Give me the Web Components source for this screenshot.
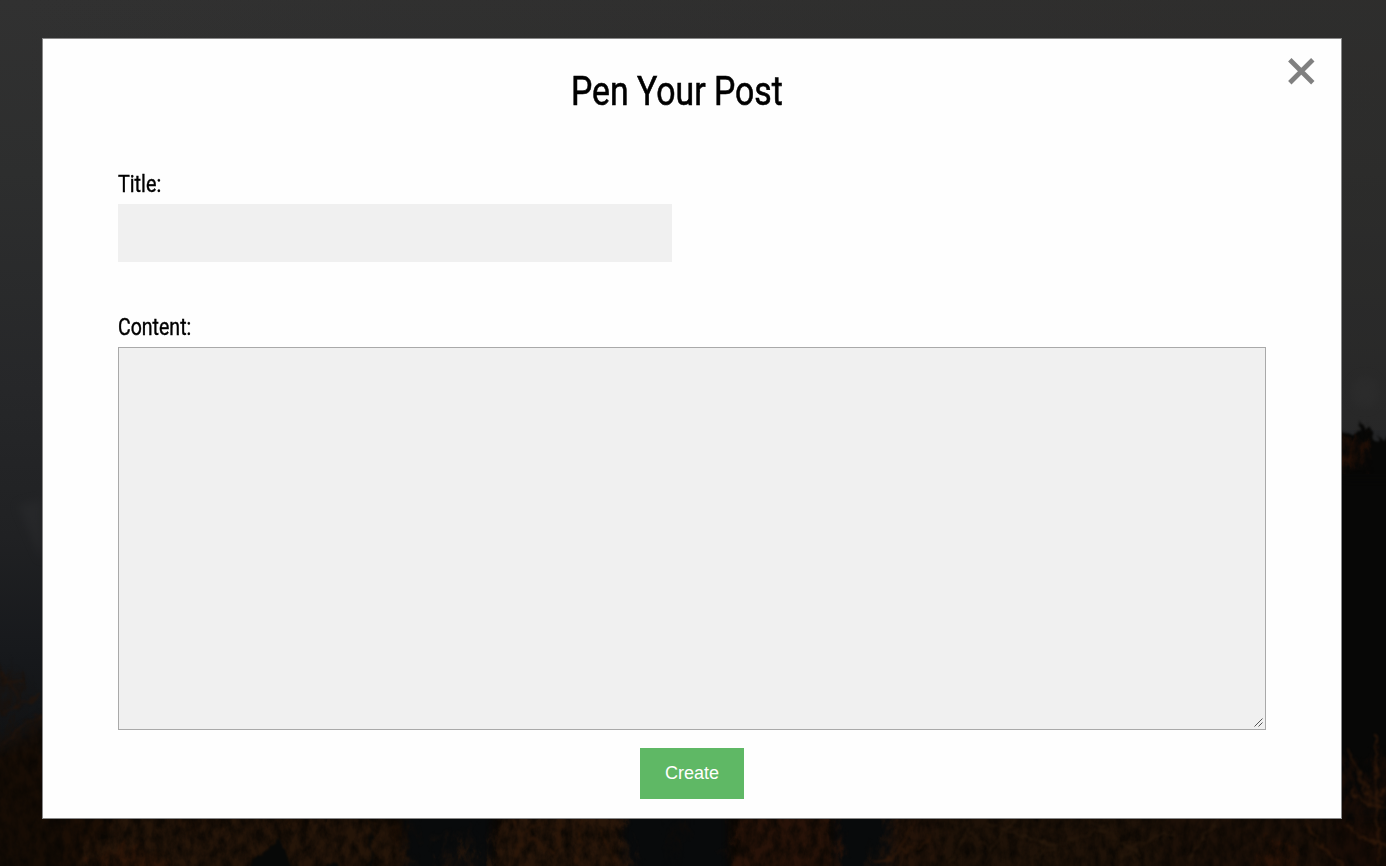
<!DOCTYPE html>
<html lang="en">
<head>
<meta charset="utf-8">
<title>Pen Your Post</title>
<style>
html, body { margin: 0; height: 100%; overflow: hidden; background: #0a0806; }
</style>
</head>
<body>
<post-page></post-page>
<script>
const define = (name, html, setup) => customElements.define(name, class extends HTMLElement {
  connectedCallback() {
    if (this.shadowRoot) return;
    const t = document.createElement('template');
    t.innerHTML = html;
    this.attachShadow({ mode: 'open' }).append(t.content.cloneNode(true));
    if (setup) setup(this, this.shadowRoot);
  }
});

// Dimmed autumn forest behind the dialog
define('forest-backdrop', `
<style>:host{display:block;position:absolute;inset:0;overflow:hidden}svg{display:block;width:100%;height:100%}filter{color-interpolation-filters:sRGB}</style>
<svg viewBox="0 0 1386 866" preserveAspectRatio="none" aria-hidden="true">
<defs>
<linearGradient id="sky" x1="0" y1="0" x2="0" y2="1">
<stop offset="0" stop-color="#313131"/><stop offset=".2" stop-color="#2d2e2e"/><stop offset=".45" stop-color="#262729"/><stop offset=".62" stop-color="#202123"/><stop offset=".75" stop-color="#17191c"/><stop offset="1" stop-color="#080909"/>
</linearGradient>
<linearGradient id="warm" x1="0" x2="1"><stop offset="0" stop-color="#2b2a28" stop-opacity="0"/><stop offset="1" stop-color="#2b2a28" stop-opacity=".5"/></linearGradient>
<filter id="soft" x="-30%" y="-30%" width="160%" height="160%"><feGaussianBlur stdDeviation="7"/></filter>
<filter id="haze" x="-50%" y="-50%" width="200%" height="200%"><feGaussianBlur stdDeviation="4"/></filter>
<filter id="leaf" x="-20%" y="-20%" width="140%" height="140%">
<feTurbulence type="fractalNoise" baseFrequency=".11 .07" numOctaves="4" seed="8" result="n"/>
<feColorMatrix in="n" values="0 0 0 0 0  0 0 0 0 0  0 0 0 0 0  0 0 0 1.7 -.22" result="m"/>
<feGaussianBlur in="SourceGraphic" stdDeviation="4" result="b"/>
<feDisplacementMap in="b" in2="n" scale="34" xChannelSelector="R" yChannelSelector="G" result="d"/>
<feComposite in="d" in2="m" operator="in"/><feGaussianBlur stdDeviation=".7"/>
</filter>
<filter id="twig" x="-20%" y="-20%" width="140%" height="140%">
<feTurbulence type="fractalNoise" baseFrequency=".12" numOctaves="2" seed="3" result="n"/>
<feDisplacementMap in="SourceGraphic" in2="n" scale="11" xChannelSelector="R" yChannelSelector="G"/><feGaussianBlur stdDeviation="1"/>
</filter>
</defs>
<rect width="1386" height="866" fill="url(#sky)"/>
<rect width="1386" height="430" fill="url(#warm)"/>
<path d="M18 505l24-6v62z" fill="#2a2b2d" opacity=".6" filter="url(#haze)"/>
<ellipse cx="1365" cy="392" rx="14" ry="16" fill="#2e2e2e" opacity=".5" filter="url(#haze)"/>
<path d="M1330 866V440l12-8 12 4 4-10 4-5 3 10 4-6 5 13 3 6 3-11 4 8 6-8v433z" fill="#070706" filter="url(#twig)"/>
<path d="M1336 440l18-5 12 6 2 22-32 4z" fill="#220f06" filter="url(#leaf)"/>
<path d="M-10 755Q20 742 50 720V810H1400V876H-10z" fill="#0b0703" filter="url(#soft)"/>
<g filter="url(#haze)" fill="#080a0b">
<rect x="402" y="812" width="90" height="64"/><rect x="622" y="812" width="106" height="64"/><rect x="834" y="812" width="62" height="64"/><rect x="1341" y="480" width="55" height="340" fill="#070706"/>
</g>
<g opacity=".84">
<g filter="url(#leaf)" fill="#2b180a">
<path d="M-10 667l22 4 16 18-10 17-28 7zM-10 732l55-16v33l-55 20z" fill="#1a1009"/>
<rect x="-10" y="750" width="65" height="125" fill="#1a0e05"/>
<path d="M60 815h350v60H60z" fill="#201005"/>
<path d="M80 876l12-35 30-20 40-4 24 12 30-8 52-4 26 10 20-12 65-2 14 12 8 24 12 27z"/>
<path d="M90 876q5-30 30-26 30-14 55 26z" fill="#341808"/>
<path d="M438 876l7-42 8 42zM456 876l12-48 10 48zM488 876l10-66 118 0 24 66z" fill="#2e190b"/>
<path d="M668 876l6-30 0-24 12 0z" fill="#150c06"/>
<path d="M728 876l10-60 94-8 8 68z" fill="#2e1509"/>
<path d="M866 876l14-26 16-44 45 6 10 64z" fill="#29160a"/>
<rect x="940" y="800" width="245" height="86" fill="#241509"/>
<rect x="1165" y="800" width="165" height="86" fill="#211208"/>
<path d="M1255 876l12-40 25 10 5 30z" fill="#301507"/>
<path d="M1340 755l12 8 14 35 8-42 14-8v128h-60z" fill="#1c0d06"/>
</g>
<g fill="#070908" filter="url(#twig)">
<path d="M245 876l12-22 8-2 14-14 6 12 10 26zM320 876l12-16 14 16z"/>
<path d="M372 812l2 64h-4z"/>
</g>
<g fill="none" stroke="#351b0a" stroke-width="2" filter="url(#twig)">
<path d="M0 686q14-8 24-3M4 716q18-14 36-20M2 745q20-24 42-30M0 672q12 14 21 27" stroke="#25150b"/>
<path d="M1347 748q12 28 24 58M1376 735q0 55 3 130M1352 790q16 22 44 16M1345 824q20 20 50 22M1306 825q26 38 45 46M1360 770q8 26 22 34M1388 780q-10 26-20 24"/>
<path d="M510 818l14 16 18-12M515 856l10-24 30 24 6-38M582 818l-6 45M600 830l15 30M875 862l18-4 20-33M900 850q24 1 30-15"/>
</g>
<path d="M950 864l18-34 22 20 24-32M1030 860q40-22 82-34M1120 860q26-25 55-27M1190 860q8-23 30-40M986 824l70 22M1090 820l52 36" fill="none" stroke="#2e1d0e" stroke-width="1.5" filter="url(#twig)"/>
</g>
</svg>`);

// Condensed lettering: natural glyphs narrowed to the requested width
define('narrow-text', `
<style>:host{display:block;font-family:Roboto,"Liberation Sans",sans-serif;white-space:nowrap;color:#000}span{display:inline-block;transform-origin:0 50%}</style>
<span><slot></slot></span>`, (host, root) => {
  const span = root.querySelector('span');
  const width = Number(host.getAttribute('width'));
  host.style.width = width + 'px';
  span.style.transform = `scaleX(${width / span.offsetWidth})`;
});

define('close-button', `
<style>:host{display:block;position:absolute;top:19px;right:26px;width:27px;height:27px;cursor:pointer}svg{display:block}</style>
<svg width="27" height="27" viewBox="0 0 27 27" role="img" aria-label="Close"><path d="M1.8 1.8L24.8 24.8M24.8 1.8L1.8 24.8" stroke="#808080" stroke-width="4.8" fill="none"/></svg>`);

define('form-field', `
<style>
:host{display:block}
narrow-text{font-size:23px;line-height:31px;height:30px;margin-bottom:5px;-webkit-text-stroke:.4px #000}
input,textarea{display:block;box-sizing:border-box;margin:0;background:#f0f0f0;border-radius:0;outline:none;font:18px "Liberation Sans",sans-serif;padding:15px}
input{width:554px;height:58px;border:0}
textarea{width:1148px;height:383px;border:1px solid #a9a9a9;resize:both}
textarea::-webkit-resizer{background:url("data:image/svg+xml,%3Csvg xmlns='http://www.w3.org/2000/svg' width='15' height='15'%3E%3Cpath d='M4.5 12.5l8-8M8.5 12.5l4-4' stroke='%23555' fill='none'/%3E%3C/svg%3E") right bottom no-repeat}
</style>
<narrow-text></narrow-text>`, (host, root) => {
  const control = document.createElement(host.hasAttribute('multiline') ? 'textarea' : 'input');
  const old = root.querySelector('narrow-text');
  const label = document.createElement('narrow-text');
  label.setAttribute('width', host.getAttribute('label-width'));
  label.textContent = host.getAttribute('label');
  control.setAttribute('aria-label', label.textContent);
  old.replaceWith(label);
  root.append(control);
});

define('submit-button', `
<style>:host{display:block}button{display:block;width:104px;height:51px;padding:0;border:0;background:#5fb865;color:#fff;font:18px/51px "Liberation Sans",Arial,sans-serif;cursor:pointer}</style>
<button><slot></slot></button>`);

define('post-dialog', `
<style>
:host{display:flex;flex-direction:column;position:relative;box-sizing:border-box;width:1300px;height:781px;background:#fefefe;border:1px solid #888;padding:27px 75px 0}
.heading{font-size:40px;line-height:52px;height:50px;margin-left:453px;-webkit-text-stroke:.6px #000}
.title{margin-top:53px}
.content{margin-top:50px}
submit-button{margin:18px auto 0}
</style>
<close-button></close-button>
<narrow-text class="heading" width="212">Pen Your Post</narrow-text>
<form-field class="title" label="Title:" label-width="43"></form-field>
<form-field class="content" label="Content:" label-width="73" multiline></form-field>
<submit-button>Create</submit-button>`);

define('post-page', `
<style>:host{display:flex;position:relative;box-sizing:border-box;width:1386px;height:866px;padding:38px 0 0 42px;align-items:flex-start;overflow:hidden}</style>
<forest-backdrop></forest-backdrop>
<post-dialog></post-dialog>`);
</script>
</body>
</html>
